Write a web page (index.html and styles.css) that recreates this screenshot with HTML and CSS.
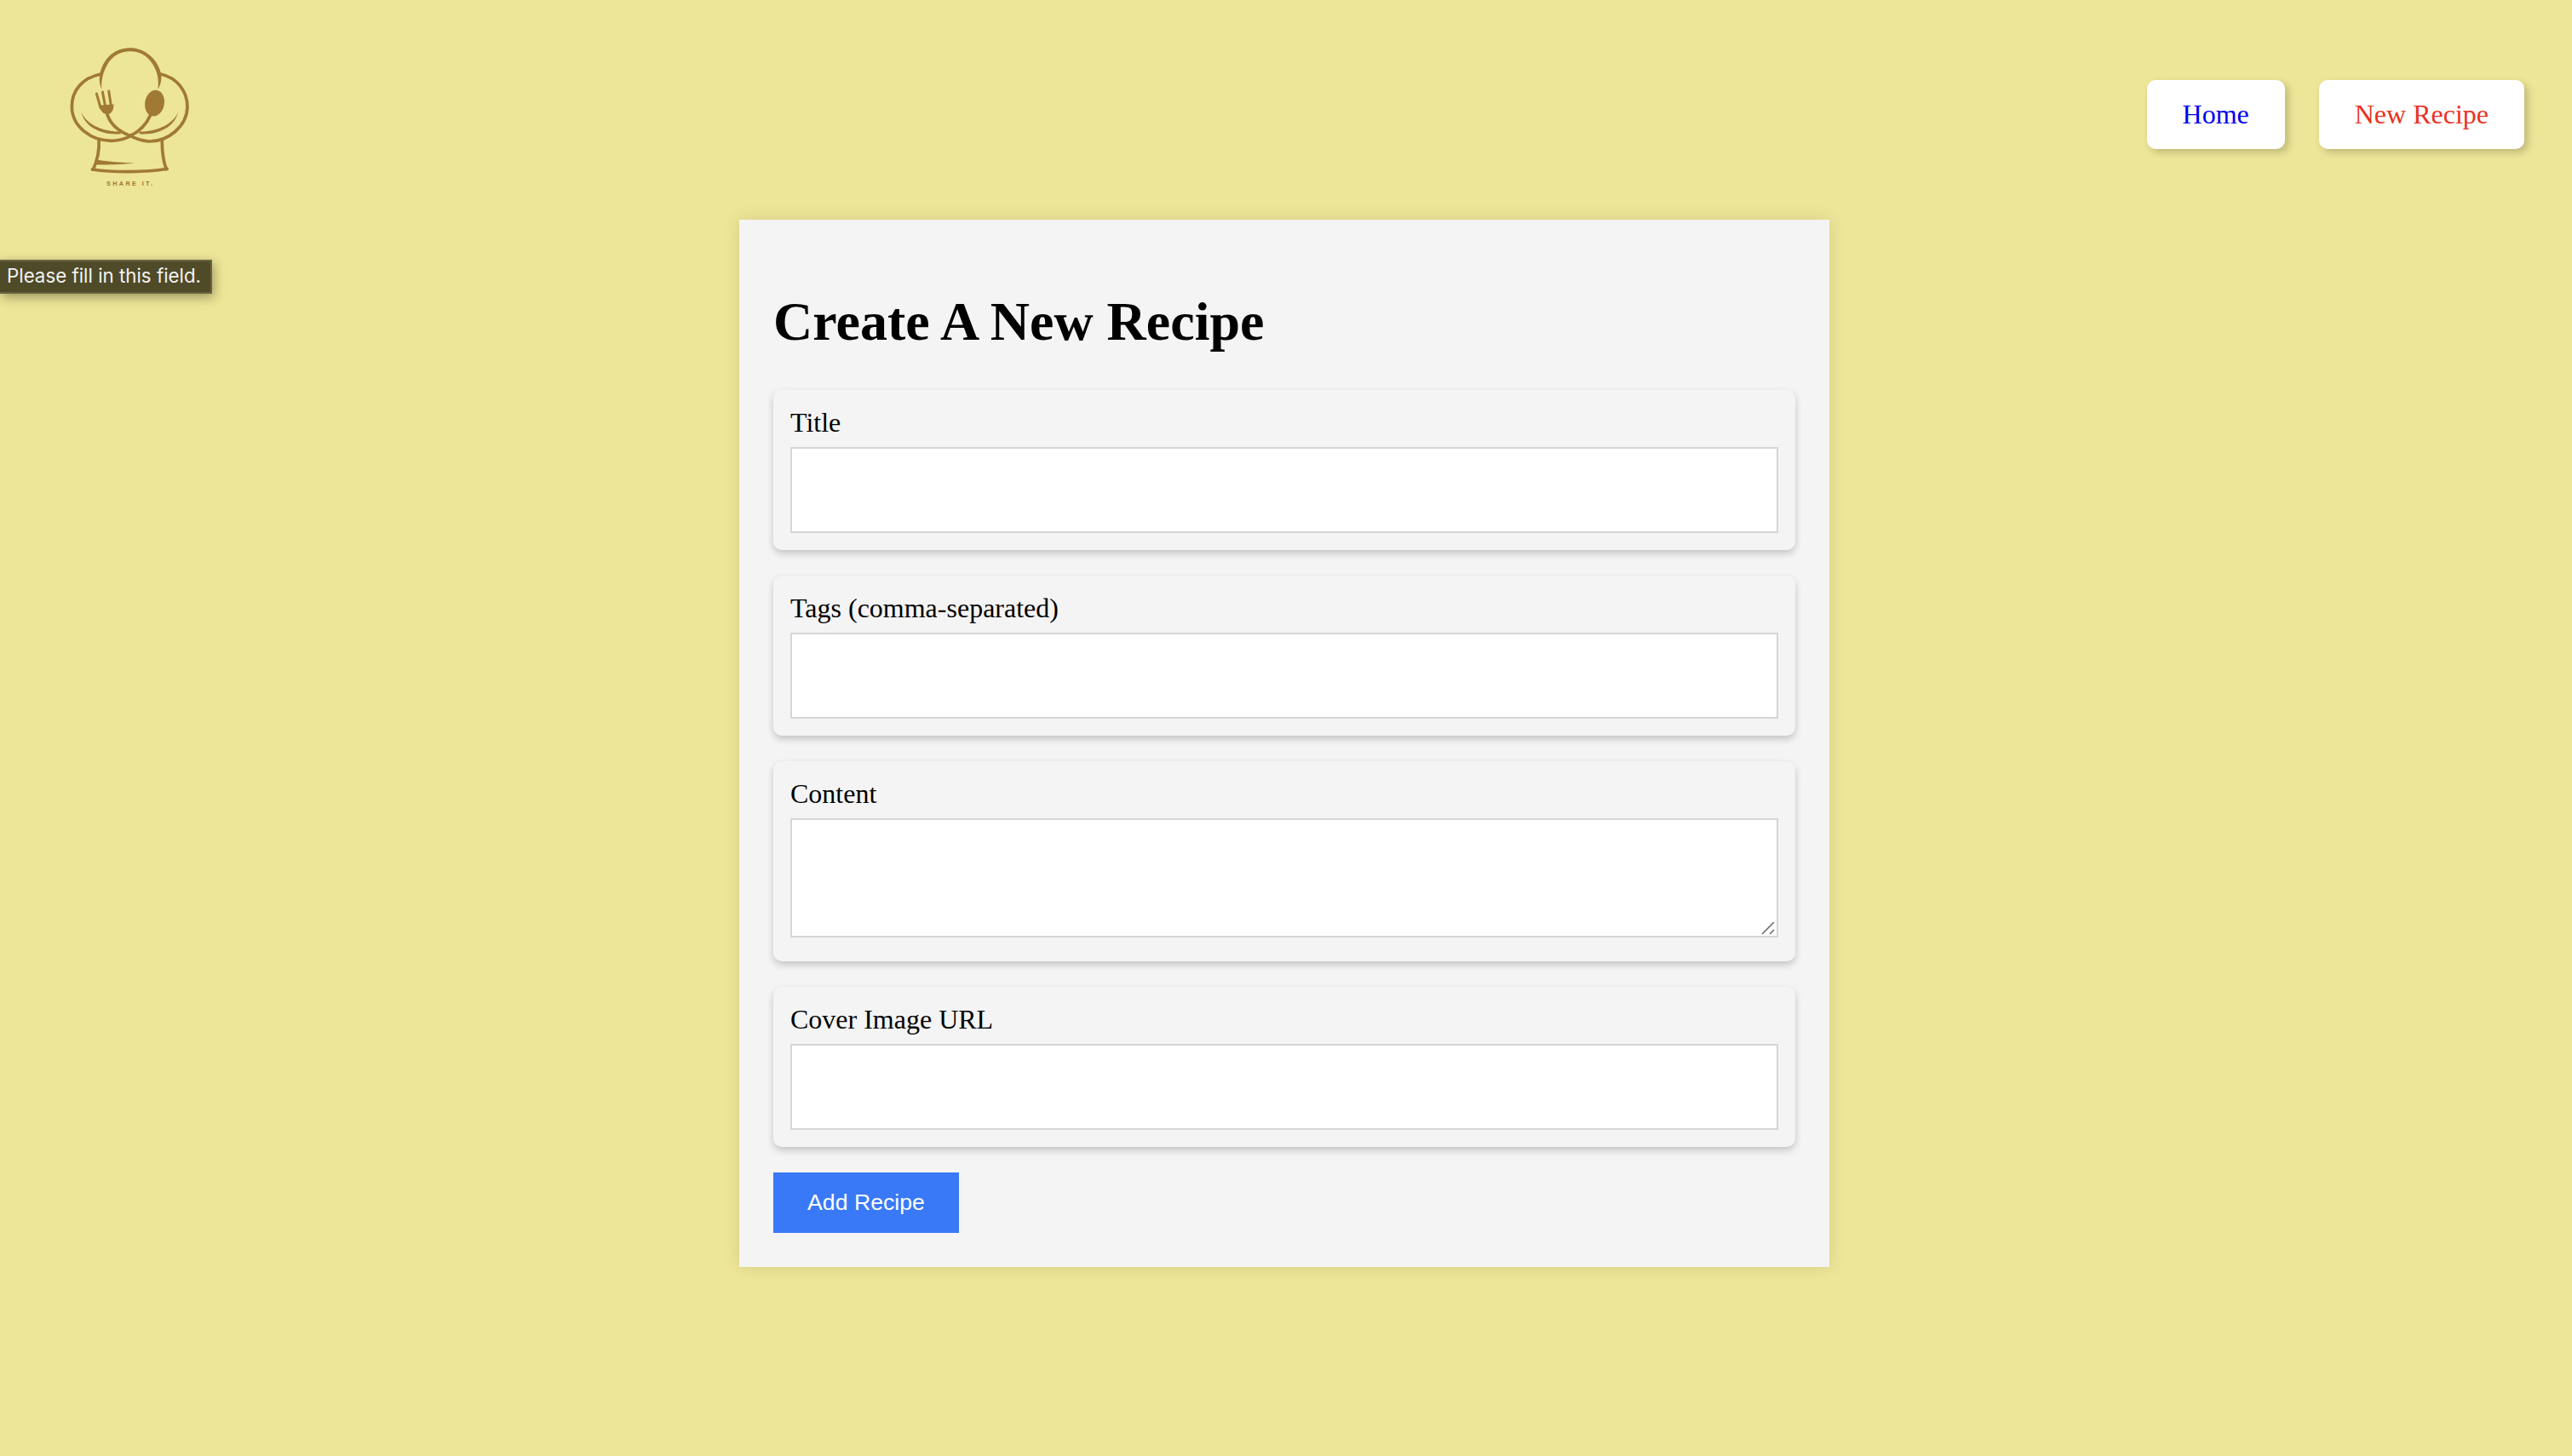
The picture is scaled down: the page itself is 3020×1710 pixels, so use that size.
FILE: index.html
```html
<!DOCTYPE html>
<html lang="en">

<head>
    <meta charset="UTF-8">
    <meta name="viewport" content="width=device-width, initial-scale=1.0">
    <title>Share It</title>
    <link rel="stylesheet" href="styles.css">
</head>

<body>
    <header class="site-header">
        <a class="logo" href="#">
            <svg class="logo-mark" viewBox="240 100 440 500" width="147" height="167">
                <!-- top lobe of the hat -->
                <path class="logo-fill" d="M358 255 C344 225 350 190 366 163 C390 123 425 110 458 110 C495 110 542 133 562 185 C572 210 568 235 556 255 C558 225 556 205 546 184 C528 142 495 122 458 122 C425 122 394 137 376 172 C362 197 356 225 358 255Z" />
                <!-- side lobes -->
                <path class="logo-line" d="M355 202 C290 215 252 260 253 318 C254 385 320 440 400 436 C425 434 445 428 462 418" />
                <path class="logo-line" d="M565 202 C625 215 660 265 659 318 C658 385 590 442 520 438 C495 436 475 428 456 418" />
                <path class="logo-fill" d="M287 335 C300 375 360 406 425 404 L425 412 C355 418 295 385 287 335Z" />
                <path class="logo-fill" d="M626 335 C613 375 553 406 490 404 L490 412 C558 418 618 385 626 335Z" />
                <!-- fork -->
                <path class="logo-line" d="M378 345 C390 380 420 405 462 420" />
                <path class="logo-line thin" d="M340 271 L354 320 M361 265 L371 318 M383 262 L391 315" />
                <path class="logo-fill" d="M348 312 L400 308 C402 352 358 356 348 312Z" />
                <!-- spoon -->
                <path class="logo-line" d="M530 345 C515 380 490 405 456 420" />
                <ellipse class="logo-fill" cx="544" cy="304" rx="34" ry="46" transform="rotate(10 544 304)" />
                <!-- band -->
                <path class="logo-line" d="M348 435 C350 470 345 500 328 537" />
                <path class="logo-line" d="M570 435 C570 470 572 500 585 537" />
                <path class="logo-line" d="M325 537 C400 548 510 548 588 535" />
                <path class="logo-fill" d="M335 503 C380 510 430 513 472 515 C430 520 370 522 332 520Z" />
                <text class="logo-text" x="459" y="593" text-anchor="middle">SHARE IT.</text>
            </svg>
        </a>
        <nav class="main-nav">
            <a class="nav-link" href="#">Home</a>
            <a class="nav-link nav-link-active" href="#">New Recipe</a>
        </nav>
    </header>

    <!-- Validation bubble -->
    <div class="validation-tip">Please fill in this field.</div>

    <main class="page-main">
        <form class="recipe-form">
            <h1>Create A New Recipe</h1>

            <div class="form-group">
                <label for="title">Title</label>
                <input id="title" type="text">
            </div>

            <div class="form-group">
                <label for="tags">Tags (comma-separated)</label>
                <input id="tags" type="text">
            </div>

            <div class="form-group">
                <label for="content">Content</label>
                <div class="textarea-wrap">
                    <textarea id="content"></textarea>
                    <svg class="resize-grip" viewBox="0 0 16 16" width="16" height="16">
                        <path d="M1 14 L15 0 M10 14 L15 9" />
                    </svg>
                </div>
            </div>

            <div class="form-group">
                <label for="cover">Cover Image URL</label>
                <input id="cover" type="text">
            </div>

            <button class="submit-btn" type="button">Add Recipe</button>
        </form>
    </main>
</body>

</html>
```

FILE: styles.css
```css
/* Reset and box-sizing rules */

* {
    box-sizing: border-box;
}

body {
    margin: 0;
    min-height: 100vh;
    background-color: #ede597;
    color: #000;
    font-family: "Liberation Serif", "Times New Roman", serif;
    font-size: 32px;
}

/* Header */

.site-header {
    display: flex;
    justify-content: space-between;
    align-items: flex-start;
    height: 258px;
    padding: 0 56px 0 80px;
}

.logo {
    display: block;
    margin-top: 53px;
}

.logo-mark {
    display: block;
}

.logo-fill {
    fill: #a07a35;
}

.logo-line {
    fill: none;
    stroke: #a07a35;
    stroke-width: 11;
    stroke-linecap: round;
}

.logo-line.thin {
    stroke-width: 9;
}

.logo-text {
    fill: #a07a35;
    font-family: "Liberation Sans", Arial, sans-serif;
    font-size: 22px;
    font-weight: bold;
    letter-spacing: 7px;
}

.main-nav {
    display: flex;
    gap: 40px;
    margin-top: 94px;
}

.nav-link {
    display: block;
    padding: 22px 42px;
    background-color: #fff;
    border-radius: 10px;
    box-shadow: 4px 4px 10px rgba(0, 0, 0, 0.2);
    color: #0000ee;
    text-decoration: none;
}

.nav-link-active {
    color: #ea3323;
}

/* Validation bubble */

.validation-tip {
    position: absolute;
    top: 305px;
    left: 0;
    width: 249px;
    height: 40px;
    padding-left: 8px;
    background-color: #4f4a28;
    border: 2px solid #69653f;
    border-left: none;
    box-shadow: 2px 4px 12px rgba(0, 0, 0, 0.35);
    color: #f2f2f2;
    font-family: Inter, "Liberation Sans", sans-serif;
    font-size: 22.3px;
    line-height: 34px;
    white-space: nowrap;
}

/* Form card */

.page-main {
    display: flex;
    justify-content: center;
    padding-right: 4px;
}

.recipe-form {
    width: 1280px;
    padding: 40px;
    background-color: #f4f4f4;
    box-shadow: 0 0 20px rgba(0, 0, 0, 0.1);
}

h1 {
    margin: 43px 0;
    font-size: 64px;
    font-weight: bold;
}

.form-group {
    margin-bottom: 30px;
    padding: 20px;
    border-radius: 10px;
    box-shadow: 0 4px 8px rgba(0, 0, 0, 0.2);
}

label {
    display: block;
    margin-bottom: 10px;
}

input,
textarea {
    display: block;
    width: 100%;
    background-color: #fff;
    border: 2px solid #d6d6d6;
    border-radius: 0;
    outline: none;
}

input {
    height: 101px;
}

.textarea-wrap {
    position: relative;
    margin-bottom: 8px;
}

textarea {
    height: 140px;
    resize: none;
}

.resize-grip {
    position: absolute;
    right: 4px;
    bottom: 2px;
    fill: none;
    stroke: #666;
    stroke-width: 1.5;
}

.submit-btn {
    display: block;
    width: 218px;
    height: 71px;
    padding: 0;
    background-color: #3979f7;
    border: none;
    color: #fff;
    font-family: "Liberation Sans", Arial, sans-serif;
    font-size: 26.67px;
}
```
